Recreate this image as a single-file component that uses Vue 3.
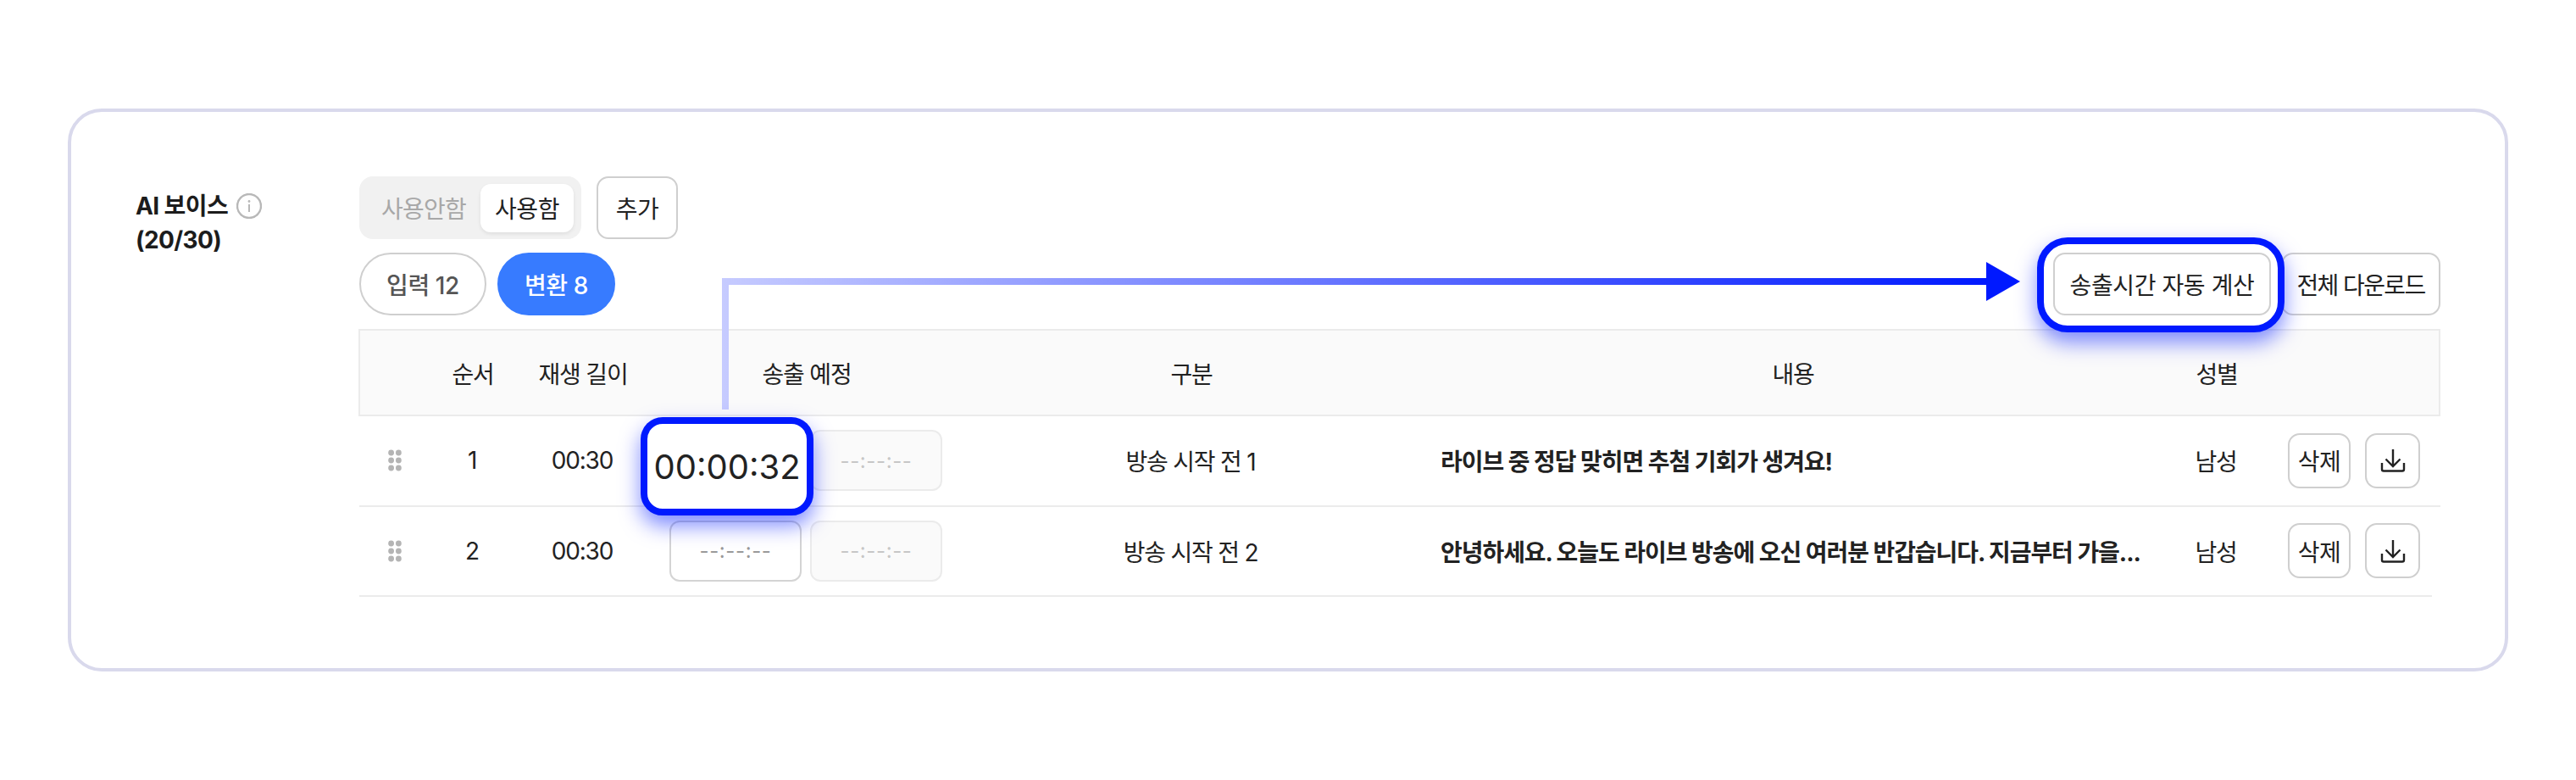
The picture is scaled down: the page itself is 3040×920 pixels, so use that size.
<script setup>
const rows = [
  { no: 1, len: '00:30', kind: '방송 시작 전 1', text: '라이브 중 정답 맞히면 추첨 기회가 생겨요!', gender: '남성', time: '00:00:32' },
  { no: 2, len: '00:30', kind: '방송 시작 전 2', text: '안녕하세요. 오늘도 라이브 방송에 오신 여러분 반갑습니다. 지금부터 가을...', gender: '남성', time: '' },
]
</script>

<template>
  <div class="page">
    <section class="card">
      <div class="label">
        <div class="label-top">AI 보이스
          <svg class="info" width="30" height="30" viewBox="0 0 30 30" fill="none">
            <circle cx="15" cy="15" r="14" stroke="#b8b8b8" stroke-width="2.4" />
            <circle cx="15" cy="9.5" r="1.4" fill="#b8b8b8" />
            <path d="M15 13v9" stroke="#b8b8b8" stroke-width="2" />
          </svg>
        </div>
        <div>(20/30)</div>
      </div>
      <div class="main">
        <div class="bar">
          <div class="seg">
            <span class="seg-off">사용안함</span>
            <span class="seg-on">사용함</span>
          </div>
          <button class="btn add">추가</button>
        </div>
        <div class="bar2">
          <div class="pills">
            <span class="pill">입력 12</span>
            <span class="pill active">변환 8</span>
          </div>
          <div class="actions">
            <div class="calc">
              <span class="ring"></span>
              <button class="btn calc-btn">송출시간 자동 계산</button>
            </div>
            <button class="btn all">전체 다운로드</button>
          </div>
        </div>
        <div class="table">
          <div class="grid head">
            <span></span><span>순서</span><span>재생 길이</span><span>송출 예정</span><span>구분</span><span>내용</span><span>성별</span><span></span>
          </div>
          <div v-for="r in rows" :key="r.no" class="grid row">
            <span class="handle">
              <svg width="16" height="26" viewBox="0 0 16 26" fill="#b4b4b4">
                <circle cx="3.6" cy="4" r="3.4" /><circle cx="12.400" cy="4" r="3.4" />
                <circle cx="3.6" cy="13" r="3.4" /><circle cx="12.400" cy="13" r="3.4" />
                <circle cx="3.6" cy="22" r="3.4" /><circle cx="12.400" cy="22" r="3.4" />
              </svg>
            </span>
            <span>{{ r.no }}</span>
            <span>{{ r.len }}</span>
            <span class="times">
              <span class="time-box">
                <span v-if="r.time" class="time-big">{{ r.time }}</span>
                <template v-else>--:--:--</template>
              </span>
              <span class="time-box off">--:--:--</span>
            </span>
            <span>{{ r.kind }}</span>
            <span class="content">{{ r.text }}</span>
            <span>{{ r.gender }}</span>
            <span class="row-btns">
              <button class="btn del">삭제</button>
              <button class="btn dl">
                <svg width="30" height="30" viewBox="0 0 30 30" fill="none" stroke="#222" stroke-width="2.4">
                  <path d="M15 2v20M6.500 13.500 15 22l8.500-8.500" />
                  <path d="M2 18v7.500a2 2 0 0 0 2 2h22a2 2 0 0 0 2-2V18" />
                </svg>
              </button>
            </span>
          </div>
        </div>
      </div>
      <svg class="arrow" width="1540" height="190" viewBox="0 0 1540 190" fill="none">
        <defs>
          <linearGradient id="grad" gradientUnits="userSpaceOnUse" x1="0" y1="0" x2="1492" y2="0">
            <stop offset="0" stop-color="#c6cbff" />
            <stop offset="1" stop-color="#0019ff" />
          </linearGradient>
        </defs>
        <path d="M4 183V32H1494" stroke="url(#grad)" stroke-width="8" />
        <path d="M1492 9 1532 32 1492 55Z" fill="#0019ff" />
      </svg>
    </section>
  </div>
</template>

<style>
html, body { margin: 0; background: #fff; }
</style>

<style scoped>
.page {
  width: 3040px;
  height: 920px;
  box-sizing: border-box;
  padding: 128px 80px 0;
  font-family: Inter, "Noto Sans CJK KR", sans-serif;
  font-size: 28px;
  color: #222;
}
.card {
  position: relative;
  box-sizing: border-box;
  width: 2880px;
  height: 664px;
  border: 4px solid #d9d9ec;
  border-radius: 40px;
  padding: 76px 76px 0;
  display: flex;
}
.label {
  width: 264px;
  flex: none;
  font-weight: 700;
  line-height: 40px;
  letter-spacing: -0.6px;
  padding-top: 15px;
  color: #1c1c1c;
}
.label-top { display: flex; align-items: center; gap: 10px; }
.main { width: 2456px; flex: none; }
.bar { display: flex; gap: 18px; }
.seg {
  box-sizing: border-box;
  width: 262px;
  height: 74px;
  background: #f1f1f1;
  border-radius: 16px;
  display: flex;
  align-items: center;
  justify-content: space-between;
  padding: 0 9px 0 26px;
}
.seg-off { color: #a8a8a8; letter-spacing: -0.8px; }
.seg-on {
  width: 110px;
  height: 57px;
  background: #fff;
  border-radius: 12px;
  box-shadow: 0 2px 4px rgba(0, 0, 0, .08);
  display: flex;
  align-items: center;
  justify-content: center;
  letter-spacing: -0.4px;
}
.btn {
  box-sizing: border-box;
  font: inherit;
  color: #222;
  background: #fff;
  border: 2px solid #cfcfcf;
  border-radius: 14px;
  padding: 0;
  letter-spacing: -0.4px;
  display: flex;
  align-items: center;
  justify-content: center;
}
.add { width: 96px; height: 74px; }
.bar2 {
  display: flex;
  justify-content: space-between;
  margin-top: 16px;
  height: 74px;
}
.pills { display: flex; gap: 13px; }
.pill {
  box-sizing: border-box;
  height: 74px;
  width: 150px;
  border: 2px solid #cfcfcf;
  border-radius: 37px;
  display: flex;
  align-items: center;
  justify-content: center;
  color: #555;
  font-weight: 500;
  letter-spacing: -0.4px;
}
.pill.active {
  width: 139px;
  background: #377bff;
  border-color: #377bff;
  color: #fff;
}
.actions { display: flex; gap: 12px; }
.calc { position: relative; z-index: 2; }
.ring {
  position: absolute;
  left: -19px;
  right: -16px;
  top: -18px;
  bottom: -20px;
  z-index: -1;
  background: #fff;
  border: 8px solid #0019ff;
  border-radius: 36px;
  box-shadow: 0 12px 24px rgba(0, 25, 255, .5);
}
.calc-btn { width: 257px; height: 74px; }
.all { width: 188px; height: 74px; letter-spacing: -1.6px; }
.table { margin-top: 16px; }
.grid {
  display: grid;
  grid-template-columns: 84px 98px 162px 366px 542px 878px 122px 1fr;
  align-items: center;
  justify-items: center;
  box-sizing: border-box;
  letter-spacing: -1.2px;
}
.head {
  height: 103px;
  background: #fafafa;
  border: 2px solid #ebebeb;
  margin-left: -1px;
}
.row {
  height: 106.5px;
  border-bottom: 2px solid #ebebeb;
}
.row:last-child { margin-right: 10px; }
.handle { display: flex; }
.times { display: flex; gap: 10px; }
.time-box {
  position: relative;
  box-sizing: border-box;
  width: 156px;
  height: 72px;
  border: 2px solid #d4d4d4;
  border-radius: 12px;
  display: flex;
  align-items: center;
  justify-content: center;
  font-size: 24px;
  color: #999;
  letter-spacing: .6px;
}
.time-box.off {
  background: #fafafa;
  border-color: #ebebeb;
  color: #c6c6c6;
}
.time-big {
  position: absolute;
  left: -36px;
  right: -16px;
  top: -17px;
  bottom: -31px;
  z-index: 2;
  box-sizing: border-box;
  background: #fff;
  border: 8px solid #0019ff;
  border-radius: 26px;
  box-shadow: 0 12px 24px rgba(0, 25, 255, .5);
  display: flex;
  align-items: center;
  justify-content: center;
  font-size: 40px;
  color: #222;
  letter-spacing: 0;
}
.content {
  justify-self: start;
  margin-left: 24px;
  font-weight: 700;
  letter-spacing: -1.05px;
  white-space: nowrap;
}
.row-btns {
  justify-self: start;
  margin-left: 24px;
  display: flex;
  gap: 17px;
  letter-spacing: -0.4px;
}
.del { width: 74px; height: 65px; }
.dl { width: 65px; height: 65px; }
.arrow {
  position: absolute;
  left: 768px;
  top: 168px;
}
</style>
